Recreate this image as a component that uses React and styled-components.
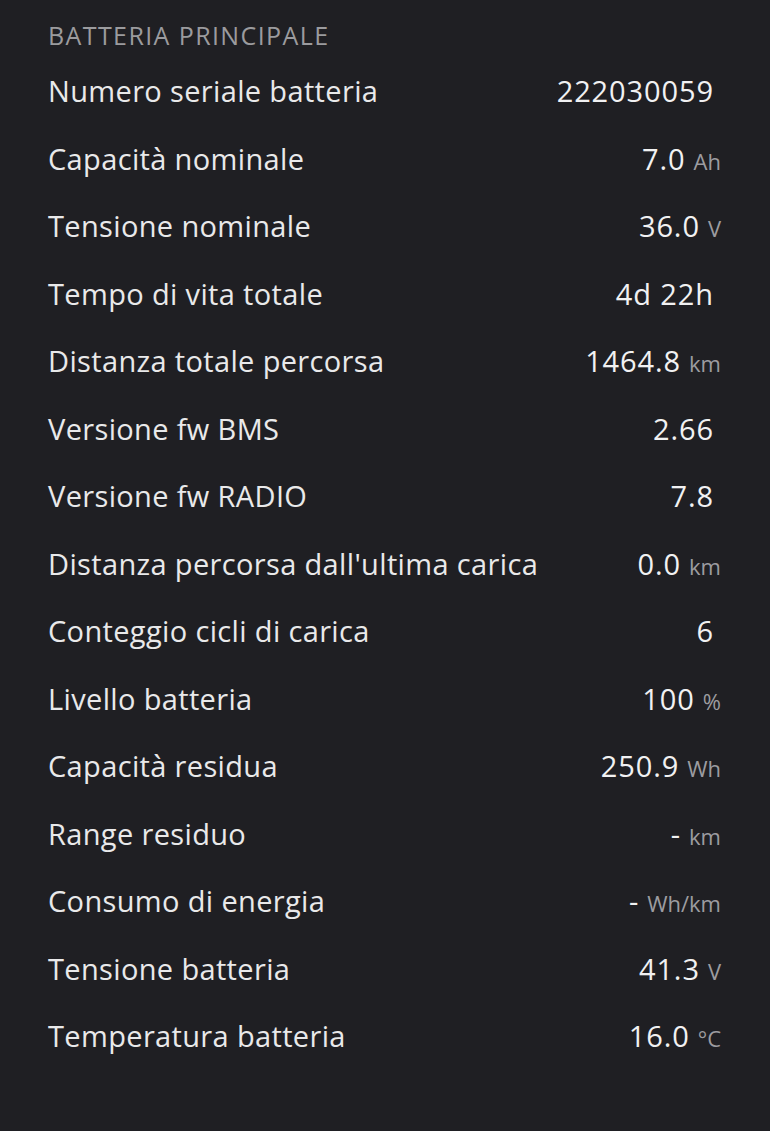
import React from 'react';
import styled, { createGlobalStyle } from 'styled-components';

const GlobalStyle = createGlobalStyle`
body {
  margin: 0;
  background: #1f1f23;
  font-family: "Open Sans", "Noto Sans", sans-serif;
}
`;

const Screen = styled.div`
width: 770px;
height: 1131px;
background: #1f1f23;
padding: 20px 49px 0 48px;
box-sizing: border-box;
`;

const SectionTitle = styled.div`
color: #9b9b9e;
font-size: 25px;
line-height: 30px;
height: 30px;
margin-bottom: 7px;
letter-spacing: 1.4px;
`;

const Row = styled.div`
display: flex;
align-items: center;
justify-content: space-between;
height: 67.5px;
`;

const Label = styled.span`
color: #e9e9ea;
font-size: 29px;
letter-spacing: 0.35px;
`;

const Value = styled.span`
color: #f1f1f2;
font-size: 29px;
font-weight: 500;
letter-spacing: 0.9px;
padding-right: ${props => (props.unit ? '0' : '7px')};
display: flex;
align-items: baseline;
`;

const Unit = styled.span`
color: #9c9ca0;
font-size: 22px;
font-weight: 400;
letter-spacing: 0;
margin-left: 8px;
`;

const rows = [
  ['Numero seriale batteria', '222030059', ''],
  ['Capacità nominale', '7.0', 'Ah'],
  ['Tensione nominale', '36.0', 'V'],
  ['Tempo di vita totale', '4d 22h', ''],
  ['Distanza totale percorsa', '1464.8', 'km'],
  ['Versione fw BMS', '2.66', ''],
  ['Versione fw RADIO', '7.8', ''],
  ["Distanza percorsa dall'ultima carica", '0.0', 'km'],
  ['Conteggio cicli di carica', '6', ''],
  ['Livello batteria', '100', '%'],
  ['Capacità residua', '250.9', 'Wh'],
  ['Range residuo', '-', 'km'],
  ['Consumo di energia', '-', 'Wh/km'],
  ['Tensione batteria', '41.3', 'V'],
  ['Temperatura batteria', '16.0', '°C'],
];

const App = () => {
  return (
    <React.Fragment>
      <GlobalStyle />
      <Screen>
        <SectionTitle>BATTERIA PRINCIPALE</SectionTitle>
        {rows.map(([label, value, unit]) => (
          <Row key={label}>
            <Label>{label}</Label>
            <Value unit={unit}>
              {value}
              {unit && <Unit>{unit}</Unit>}
            </Value>
          </Row>
        ))}
      </Screen>
    </React.Fragment>
  );
};

export default App;
